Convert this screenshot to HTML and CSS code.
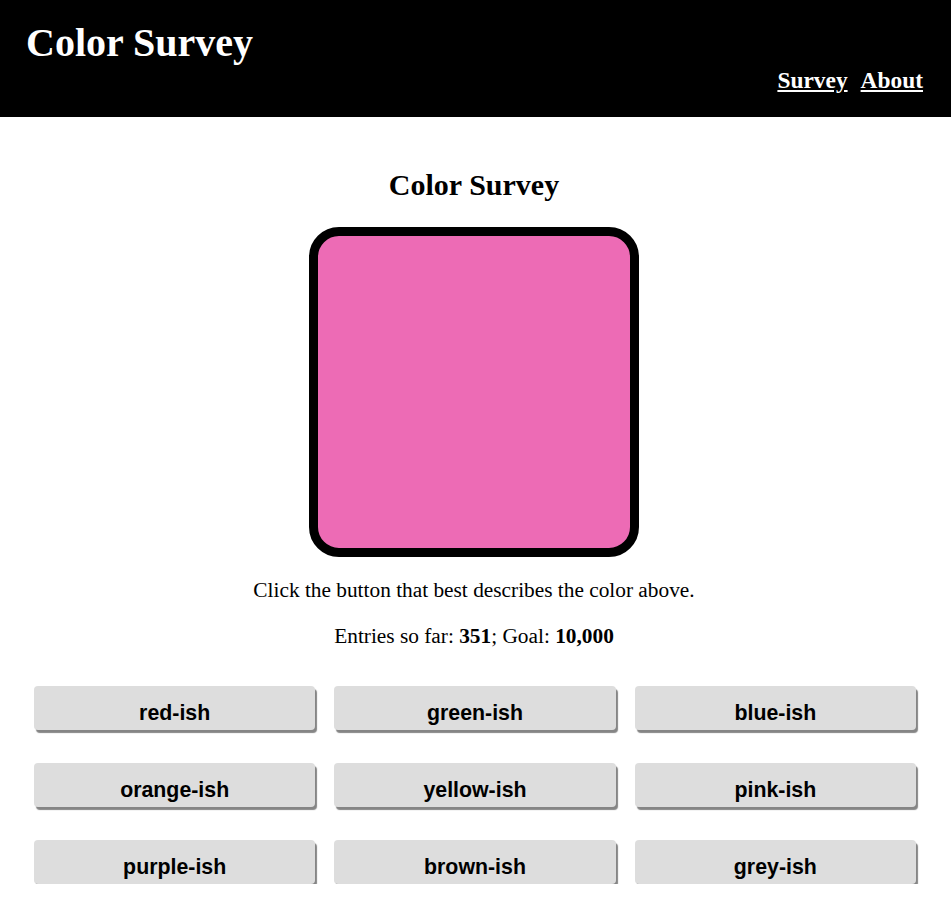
FILE: index.html
```html
<!DOCTYPE html>
<html>
<head>
<meta charset="utf-8">
<title>Color Survey</title>
<link rel="stylesheet" href="styles.css">
</head>
<body>
<header class="site-header">
  <h1 class="site-title">Color Survey</h1>
  <nav class="site-nav">
    <a href="#">Survey</a>
    <a href="#">About</a>
  </nav>
</header>
<main class="survey">
  <section class="prompt">
    <h2 class="survey-title">Color Survey</h2>
    <div class="swatch"></div>
    <p class="instructions">Click the button that best describes the color above.</p>
    <p class="progress">Entries so far: <b>351</b>; Goal: <b>10,000</b></p>
  </section>
  <div class="choices">
    <button class="choice">red-ish</button>
    <button class="choice">green-ish</button>
    <button class="choice">blue-ish</button>
    <button class="choice">orange-ish</button>
    <button class="choice">yellow-ish</button>
    <button class="choice">pink-ish</button>
    <button class="choice">purple-ish</button>
    <button class="choice">brown-ish</button>
    <button class="choice">grey-ish</button>
  </div>
</main>
</body>
</html>
```
FILE: styles.css
```css
html, body {
  margin: 0;
  padding: 0;
  background: #fff;
  font-family: "Liberation Serif", "Times New Roman", serif;
  color: #000;
}

.site-header {
  background: #000;
  color: #fff;
  height: 117px;
  box-sizing: border-box;
  padding: 21px 28px 0 26px;
  display: flex;
  justify-content: space-between;
  align-items: flex-start;
}

.site-title {
  margin: 0;
  font-size: 40px;
  line-height: 44px;
  font-weight: bold;
}

.site-nav {
  margin-top: 46px;
  display: flex;
  gap: 13px;
  font-size: 23.4px;
  font-weight: bold;
  line-height: 26px;
}

.site-nav a {
  color: #fff;
  text-decoration: underline;
}

.survey {
  padding: 0 34px;
}

.prompt {
  display: flex;
  flex-direction: column;
  align-items: center;
  padding-right: 3px;
}

.survey-title {
  margin: 51px 0 0;
  font-size: 30px;
  line-height: 34px;
  font-weight: bold;
}

.swatch {
  margin-top: 25px;
  width: 312px;
  height: 312px;
  border: 9px solid #000;
  border-radius: 30px;
  background: #ed6bb5;
}

.instructions {
  margin: 21px 0 0;
  font-size: 21.33px;
  line-height: 24px;
}

.progress {
  margin: 22px 0 0;
  font-size: 21.33px;
  line-height: 24px;
}

.choices {
  margin-top: 38px;
  padding-right: 1px;
  display: grid;
  grid-template-columns: repeat(3, 1fr);
  column-gap: 19px;
  row-gap: 33px;
}

.choice {
  height: 44px;
  border: none;
  border-radius: 4px;
  background: #dddddd;
  box-shadow: 2px 3px 1px #858585;
  font-family: "Liberation Sans", Arial, sans-serif;
  font-size: 21.33px;
  font-weight: bold;
  color: #000;
  padding: 11px 0 0;
}
```
